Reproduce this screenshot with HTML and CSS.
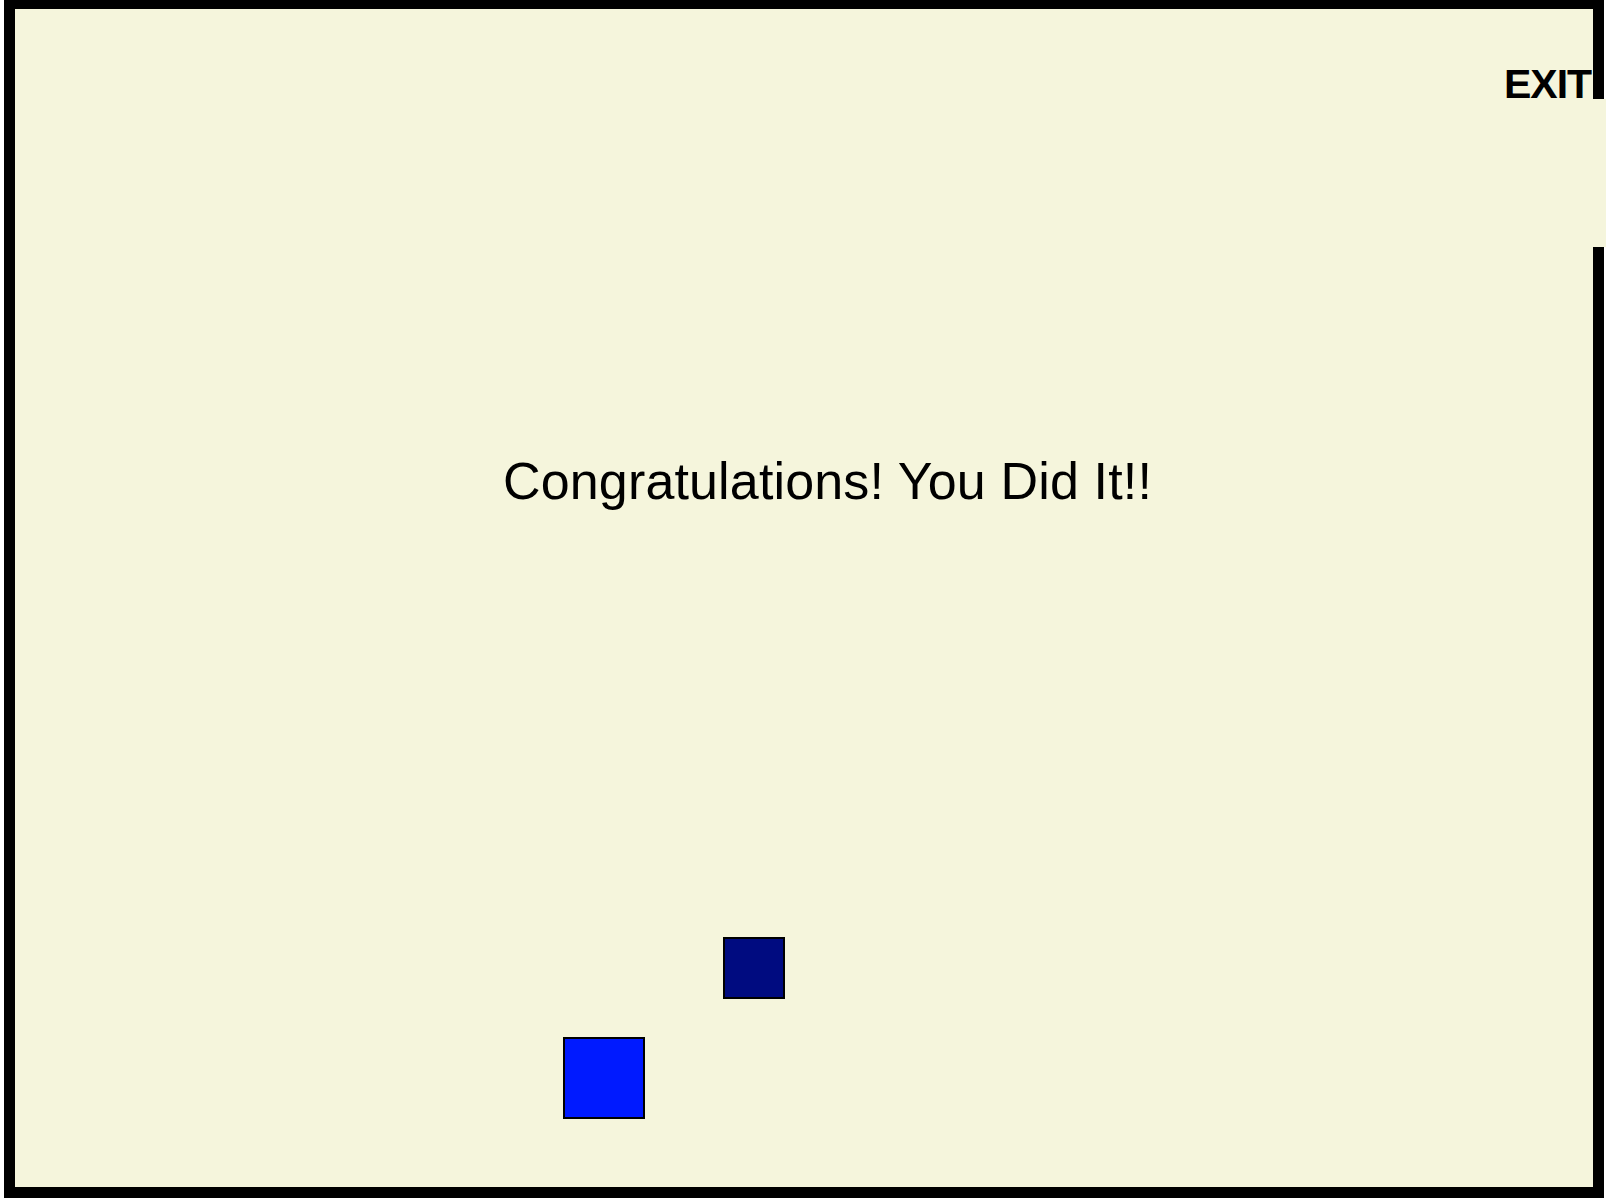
FILE: index.html
```html
<!DOCTYPE html>
<html>
<head>
<meta charset="utf-8">
<title>Maze</title>
<link rel="stylesheet" href="styles.css">
</head>
<body>
<div class="board">
  <div class="exit-gap"></div>
  <div class="exit-label">EXIT</div>
  <h1 class="message">Congratulations! You Did It!!</h1>
  <div class="piece piece-goal"></div>
  <div class="piece piece-player"></div>
</div>
</body>
</html>
```
FILE: styles.css
```css
html, body {
  margin: 0;
  padding: 0;
  background: #ffffff;
  overflow: hidden;
}
.board {
  position: relative;
  box-sizing: border-box;
  width: 1600px;
  height: 1198px;
  margin-left: 4px;
  background: #f5f5dc;
  border-style: solid;
  border-color: #000;
  border-width: 9px 11px 11px 11px;
  font-family: "Liberation Sans", Arial, Helvetica, sans-serif;
  color: #000;
}
.message {
  margin: 446px 0 0 488px;
  font-size: 52px;
  line-height: 52px;
  font-weight: normal;
  letter-spacing: 0.15px;
  white-space: nowrap;
}
.exit-gap {
  position: absolute;
  left: 1576px;
  top: 90px;
  width: 15px;
  height: 148px;
  background: #f5f5dc;
}
.exit-label {
  position: absolute;
  left: 1489px;
  top: 55px;
  font-size: 41px;
  line-height: 41px;
  font-weight: bold;
  letter-spacing: -1px;
}
.piece {
  position: absolute;
  box-sizing: border-box;
  border: 2px solid #000;
}
.piece-goal {
  left: 708px;
  top: 928px;
  width: 62px;
  height: 62px;
  background: #000b80;
}
.piece-player {
  left: 548px;
  top: 1028px;
  width: 82px;
  height: 82px;
  background: #001aff;
}
```
